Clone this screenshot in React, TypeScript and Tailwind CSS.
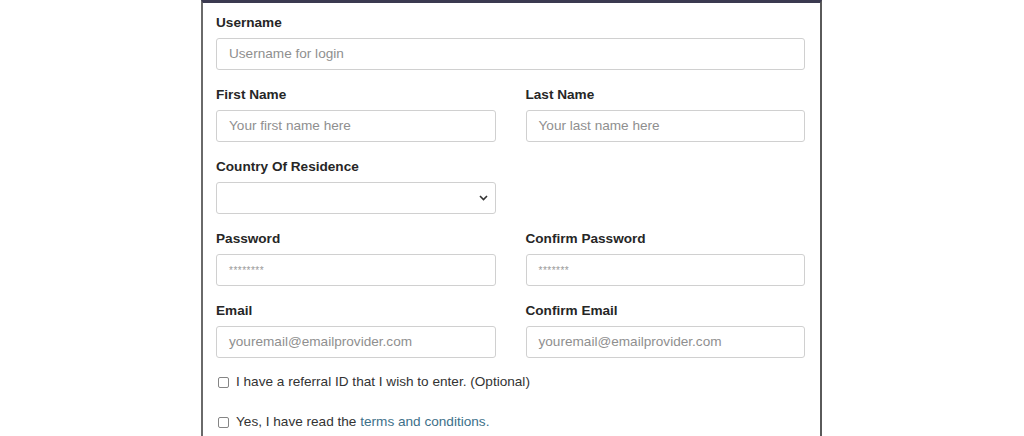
import React from "react";

const font = { fontFamily: '"Liberation Sans", Arial, sans-serif' };

function Label({ children }: { children: React.ReactNode }) {
  return (
    <div className="h-[20px] leading-[22px] text-[13.6px] font-bold text-[#262626] mb-[6px]">
      {children}
    </div>
  );
}

function TextInput({ placeholder, small }: { placeholder: string; small?: boolean }) {
  return (
    <div className="h-[32px] w-full rounded-[3px] border border-[#d0d0d0] bg-white pl-[12px] flex items-center">
      <span className={small ? "text-[10px] tracking-[0.5px] text-[#9a9a9a]" : "text-[13.6px] text-[#8f8f8f]"}>
        {placeholder}
      </span>
    </div>
  );
}

function Field({ label, placeholder, small }: { label: string; placeholder: string; small?: boolean }) {
  return (
    <div className="flex flex-col">
      <Label>{label}</Label>
      <TextInput placeholder={placeholder} small={small} />
    </div>
  );
}

function Check({ children }: { children: React.ReactNode }) {
  return (
    <div className="flex items-center h-[20px] text-[13.6px] text-[#333]">
      <span className="ml-[2px] mr-[7px] inline-block w-[11px] h-[11px] rounded-[2px] border border-[#858585] bg-white" />
      <span>{children}</span>
    </div>
  );
}

export default function App() {
  return (
    <div className="w-[1024px] h-[436px] bg-white overflow-hidden" style={font}>
      <div className="ml-[201px] w-[621px] h-[436px] border-t-[3px] border-t-[#3b3a50] border-l-2 border-r-2 border-l-[#6a6a6a] border-r-[#5a5a5a] pl-[13px] pr-[15px] pt-[9px]">
        <div className="flex flex-col gap-[14px]">
          <Field label="Username" placeholder="Username for login" />
          <div className="grid grid-cols-2 gap-x-[30px]">
            <Field label="First Name" placeholder="Your first name here" />
            <Field label="Last Name" placeholder="Your last name here" />
          </div>
          <div className="grid grid-cols-2 gap-x-[30px]">
            <div className="flex flex-col">
              <Label>Country Of Residence</Label>
              <div className="h-[32px] w-full rounded-[3px] border border-[#d0d0d0] bg-white flex items-center justify-end pr-[7px]">
                <svg width="9" height="6" viewBox="0 0 9 6">
                  <path d="M1 1 L4.5 4.5 L8 1" fill="none" stroke="#333" strokeWidth="1.6" />
                </svg>
              </div>
            </div>
            <div />
          </div>
          <div className="grid grid-cols-2 gap-x-[30px]">
            <Field label="Password" placeholder="********" small />
            <Field label="Confirm Password" placeholder="*******" small />
          </div>
          <div className="grid grid-cols-2 gap-x-[30px]">
            <Field label="Email" placeholder="youremail@emailprovider.com" />
            <Field label="Confirm Email" placeholder="youremail@emailprovider.com" />
          </div>
          <div className="flex flex-col gap-[20px]">
            <Check>I have a referral ID that I wish to enter. (Optional)</Check>
            <Check>
              Yes, I have read the <span className="text-[#3d7089]">terms and conditions.</span>
            </Check>
          </div>
        </div>
      </div>
    </div>
  );
}
